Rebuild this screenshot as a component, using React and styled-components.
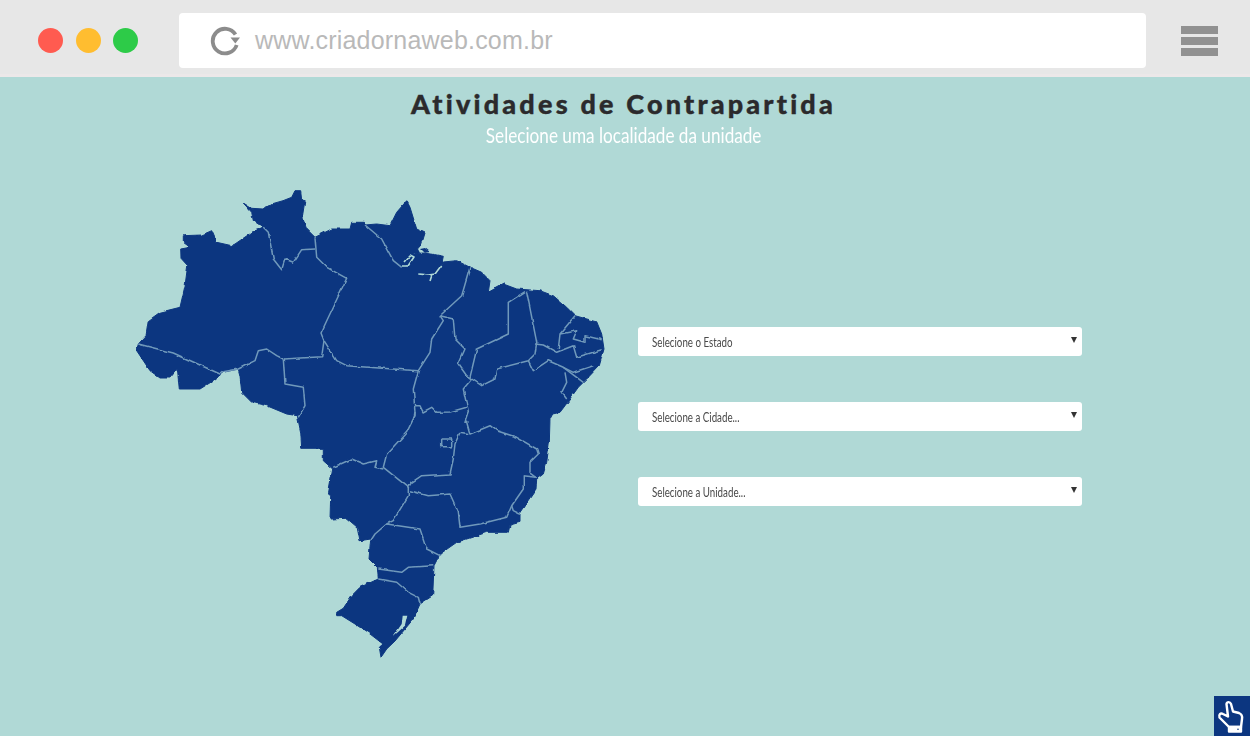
import React from "react";
import styled, { createGlobalStyle } from "styled-components";

const Global = createGlobalStyle`
  html, body { margin: 0; padding: 0; height: 100%; background: #b0d9d6; overflow: hidden; }
  #root { height: 100%; }
`;

const Page = styled.div`
  position: relative;
  width: 1250px;
  height: 736px;
  display: flex;
  flex-direction: column;
  background: #b0d9d6;
`;

const BrowserBar = styled.header`
  height: 77px;
  box-sizing: border-box;
  padding: 13px 31px 0 38px;
  display: flex;
  align-items: flex-start;
  background: #e7e7e7;
  border-bottom: 3px solid #ece8e9;
`;

const Dots = styled.div`
  display: flex;
  gap: 12.5px;
  margin-top: 15px;
  margin-right: 41px;
`;

const Dot = styled.span`
  width: 25px;
  height: 25px;
  border-radius: 50%;
  background: ${p => p.$color};
`;

const Address = styled.div`
  width: 967px;
  height: 55px;
  box-sizing: border-box;
  padding-left: 31px;
  display: flex;
  align-items: center;
  gap: 15px;
  background: #fff;
  border-radius: 4px;
  font: 25px "Liberation Sans", Arial, sans-serif;
  letter-spacing: 0.2px;
  color: #b9b9b9;
`;

const Menu = styled.div`
  margin: 13px 0 0 35px;
  width: 37px;
  display: flex;
  flex-direction: column;
  gap: 3px;
`;

const MenuBar = styled.span`
  height: 8px;
  background: #919191;
`;

const Main = styled.main`
  flex: 1;
  display: flex;
  flex-direction: column;
  min-height: 0;
`;

const Heading = styled.div`
  display: flex;
  flex-direction: column;
  align-items: center;
  padding: 11px 3px 0 0;
`;

const Title = styled.h1`
  margin: 0;
  font: 900 27px/32px Lato, "Open Sans", sans-serif;
  letter-spacing: 3.2px;
  color: #2b2a2c;
  -webkit-text-stroke: 0.4px #2b2a2c;
`;

const Subtitle = styled.p`
  margin: 2px 0 0;
  font: 400 22px/26px Lato, sans-serif;
  color: #fff;
  transform: scaleX(0.78);
`;

const Content = styled.section`
  display: flex;
  align-items: flex-start;
  padding: 36px 0 0 130px;
`;

const MapSvg = styled.svg`
  width: 480px;
  height: 480px;
  flex: none;
`;

const Form = styled.div`
  width: 444px;
  margin: 143px 0 0 28px;
  display: flex;
  flex-direction: column;
  gap: 46px;
`;

const Select = styled.div`
  height: 29px;
  box-sizing: border-box;
  padding: 0 5px 0 14px;
  display: flex;
  align-items: center;
  justify-content: space-between;
  background: #fff;
  border-radius: 3px;
  font: 12.5px Lato, sans-serif;
  color: #4a4a4a;
`;

const SelectLabel = styled.span`
  display: inline-block;
  padding-top: 2px;
  transform: scaleX(0.78);
  transform-origin: left center;
`;

const Caret = styled.span`
  width: 0;
  height: 0;
  margin-bottom: 3px;
  border-left: 3px solid transparent;
  border-right: 3px solid transparent;
  border-top: 6px solid #333;
`;

const PointerBadge = styled.div`
  position: absolute;
  right: 0;
  bottom: 0;
  width: 36px;
  height: 40px;
  background: #0c3680;
`;

const OUTLINE = `M243.3 204 L251.7 209.3 L263 210 L268 206 L283 201.7 L291.7 198.3 L295 191.7 L300.7 191.7 L301.7 200 L305.7 203 L303 220 L306.7 230 L315 238.3 L331.7 230 L350 230 L351.7 223.3 L363.3 223.3 L370 230 L365 226 L376.7 225 L390 226.7 L396.7 213.3 L406.7 201.7 L410 208.3 L416.7 230 L425 234 L421.7 245 L413.3 255 L421.7 254 L431.7 255 L443.3 257.3 L441.7 265 L443.3 263 L456.7 261.7 L470 268.3 L481.7 273.3 L490 281.7 L488.3 293.3 L503.3 285 L516.7 290 L540 291.7 L553.3 296.7 L566.7 308.3 L575 316.7 L596.7 322.7 L601.7 335 L604 350 L599.3 366.7 L586.7 380 L578.3 388.3 L565 406.7 L560 413.3 L552.7 415 L550 420 L549.3 443.3 L546.7 463.3 L543.3 475 L536.7 480 L536 490 L520 513.3 L520 523.3 L510 526 L508.3 533.3 L486.7 533.3 L476.7 536.7 L456.7 543.3 L440 555 L434 566.7 L432.7 596.7 L420 605 L413.3 620 L400 636 L395 642 L386.7 650 L381 658.3 L379.3 648.3 L383 645 L370 635 L355 625 L341.7 616.7 L336.7 616.7 L336.7 613.3 L343.3 609.3 L351.7 596.7 L360 588.3 L378.3 580 L377.3 568.3 L369 560 L370.7 540 L360 541.7 L357.3 528.3 L346.7 519.3 L330 520 L330.7 496.7 L328.3 495 L332.7 470 L323.3 461.7 L323.3 449.3 L301.7 449.3 L300.7 433.3 L297.3 416.7 L286.7 415 L266.7 406.7 L251.7 403.3 L241.7 393.3 L240 376.7 L238.3 370 L223.3 373.3 L213.3 381.7 L200 390 L179.3 390 L177.3 370 L170 379 L160 379 L150 371.7 L136.7 351.7 L138.3 345 L146 336.7 L148.3 321.7 L160 313.3 L180 308.3 L185 286.7 L187.7 266.7 L181 259.3 L180.7 250 L190 248.3 L183.3 243.3 L183.3 236.7 L201.7 236 L211.7 231.7 L216.7 243.3 L231.7 246.7 L235 245 L256.7 230 L263.3 228.3 L253.3 221.7 L251.7 213.3 Z`;

const ISLETS = ["M420 250 L425 249 L430 253 L424 254 Z", "M413 251 L418 250 L420 254 L415 255 Z"];
const LAGOON = "M402.7 616.7 L407.3 616.7 L405 626.7 L393.3 637.3 L398.3 630 L401.7 625 Z";

const CHANNELS = [
  "402,267 408,267 414,258 410,256 404,263",
  "418.3,275 428.3,276 435,275 441.7,266",
  "430,282 432,276",
];

const BORDERS = [
  "138.3,345 173.3,354 220,375 223.3,372.7 238.3,370 255,361.7 258.3,351.7 266.7,350 276.7,356.7 283.3,360 321.7,357.7 324,341.7 321,334 346.7,279.3 326.7,268.3 316.7,258.3 315,238.3",
  "263.3,228.3 268.3,233.3 273.3,260 281.7,270.7 285,260 293.3,263.3 301.7,250.7 315,250",
  "283.3,360 285,385 303.3,388.3 305,406.7 298.3,418.3",
  "324,341.7 336.7,361.7 346.7,366.7 418.3,371.7",
  "365,226 381.7,240 393.3,261.7 401.7,268.3",
  "470,268.3 461.7,296.7 440,316.7 443.3,321.7 431.7,340 430,353.3 418.3,371.7 413.3,390 415,413.3 414,420",
  "440,316.7 453.3,320 455,340 465,350 458.3,365 466.7,376.7 471.7,380",
  "525,292.7 508.3,303.3 508.3,335 476.7,350 470,378.3",
  "526.7,292.7 536.7,343.3 535,355 528.3,361.7 496.7,370 495,380 481.7,386.7 471.7,380 463.3,390 468.3,413.3 465,423.3 466.7,423.3 470,435",
  "415,406.7 420,406.7 423,413 431.7,408.3 436.7,413.3 450,413 466.7,408.3",
  "535,345 543.3,346 556.7,353.3 573.3,346.7 576.7,358.3 601.7,350.7",
  "575,316.7 560,335 558.3,350",
  "560,335 576.7,331.7 573.3,340 585,343.3 585,336.7 601.7,340.7",
  "528.3,361.7 533.3,371.7 548.3,361.7 563.3,368.3 583.3,383.3",
  "563.3,368.3 573.3,373.3 593.3,366.7",
  "565,373.3 566.7,383.3 561.7,393.3 566.7,400",
  "470,435 490,426.7 496.7,431.7 516.7,438.3 536.7,450 538.3,455 530,463.3 530,473.3 536.7,478.3",
  "470,435 460,433.3 455,445 453.3,460 450,475 421.7,476.7 411.7,483.3 408.3,488.3",
  "415,413 415,416.7 406.7,433.3 386.7,455 383.3,468.3 408.3,488.3 408.3,496.7 393.3,521.7 386.7,525 375,535 370.7,541.7",
  "383.3,470 375,468.3 376.7,461.7 363.3,465 351.7,460 333.3,468.3",
  "410,491.7 428.3,496.7 450,495 458.3,513.3 460,528.3 480,525 506.7,518.3 511.7,506.7 523.3,490 523.3,476.7 536.7,478.3",
  "511.7,506.7 513.3,511.7 520,515",
  "386.7,525 420,530 426.7,550 440,556.7",
  "378.3,570 401.7,573.3 408.3,568.3 433.3,566.7",
  "378.3,580 396.7,583.3 408.3,593.3 418.3,598.3 420,605",
  "441.7,440 451.7,440 451.7,447.7 441.7,447.7 441.7,440",
];

const BrazilMap = () => (
  <MapSvg viewBox="130 185 480 480" aria-label="Mapa do Brasil">
    <defs>
      <filter id="rough" x="130" y="185" width="480" height="480" filterUnits="userSpaceOnUse" colorInterpolationFilters="sRGB">
        <feTurbulence type="fractalNoise" baseFrequency="0.11" numOctaves="2" seed="4" result="n" />
        <feDisplacementMap in="SourceGraphic" in2="n" scale="3" xChannelSelector="R" yChannelSelector="G" />
        <feGaussianBlur stdDeviation="0.35" />
      </filter>
    </defs>
    <g filter="url(#rough)">
      <path d={OUTLINE} fill="#0c3680" stroke="#0c3680" strokeWidth="1" strokeLinejoin="round" />
      {ISLETS.map(d => <path key={d} d={d} fill="#0c3680" />)}
      <path d={LAGOON} fill="#b0d9d6" />
      {CHANNELS.map(points => (
        <polyline key={points} points={points} fill="none" stroke="#b0d9d6" strokeWidth="1.6" strokeLinejoin="round" />
      ))}
      {BORDERS.map(points => (
        <polyline key={points} points={points} fill="none" stroke="#7099bb" strokeWidth="1.5" strokeLinejoin="round" />
      ))}
    </g>
  </MapSvg>
);

const Reload = () => (
  <svg width="30" height="30" viewBox="0 0 30 30" fill="none">
    <path d="M25.5 8.6 A12.3 12.3 0 1 0 26.7 19" stroke="#8c8c8c" strokeWidth="3.8" />
    <path d="M20.5 11.5 L30 11.5 L25.3 17.5 Z" fill="#8c8c8c" />
  </svg>
);

const Hand = () => (
  <svg width="36" height="40" viewBox="0 0 36 40" fill="none" stroke="#fff" strokeWidth="2.4" strokeLinejoin="round" strokeLinecap="round">
    <path d="M12.5 8 C13 5.5 16 5.5 17 8 L19 15.5 L25 17 C27.5 18 28.5 20 28 23 L27 31 L15 31 L5.5 21.5 C4.5 18.5 6.5 16.5 9 18 L14 20.5 Z" />
    <path d="M15 31 H27 V35.5 H15 Z" fill="#fff" />
    <circle cx="24" cy="33.2" r="0.8" fill="#0c3680" stroke="none" />
  </svg>
);

export default function App() {
  return (
    <Page>
      <Global />
      <BrowserBar>
        <Dots>
          <Dot $color="#ff5b50" />
          <Dot $color="#ffbd30" />
          <Dot $color="#2dcb48" />
        </Dots>
        <Address>
          <Reload />
          www.criadornaweb.com.br
        </Address>
        <Menu>
          <MenuBar />
          <MenuBar />
          <MenuBar />
        </Menu>
      </BrowserBar>
      <Main>
        <Heading>
          <Title>Atividades de Contrapartida</Title>
          <Subtitle>Selecione uma localidade da unidade</Subtitle>
        </Heading>
        <Content>
          <BrazilMap />
          <Form>
            <Select><SelectLabel>Selecione o Estado</SelectLabel><Caret /></Select>
            <Select><SelectLabel>Selecione a Cidade...</SelectLabel><Caret /></Select>
            <Select><SelectLabel>Selecione a Unidade...</SelectLabel><Caret /></Select>
          </Form>
        </Content>
      </Main>
      <PointerBadge><Hand /></PointerBadge>
    </Page>
  );
}
